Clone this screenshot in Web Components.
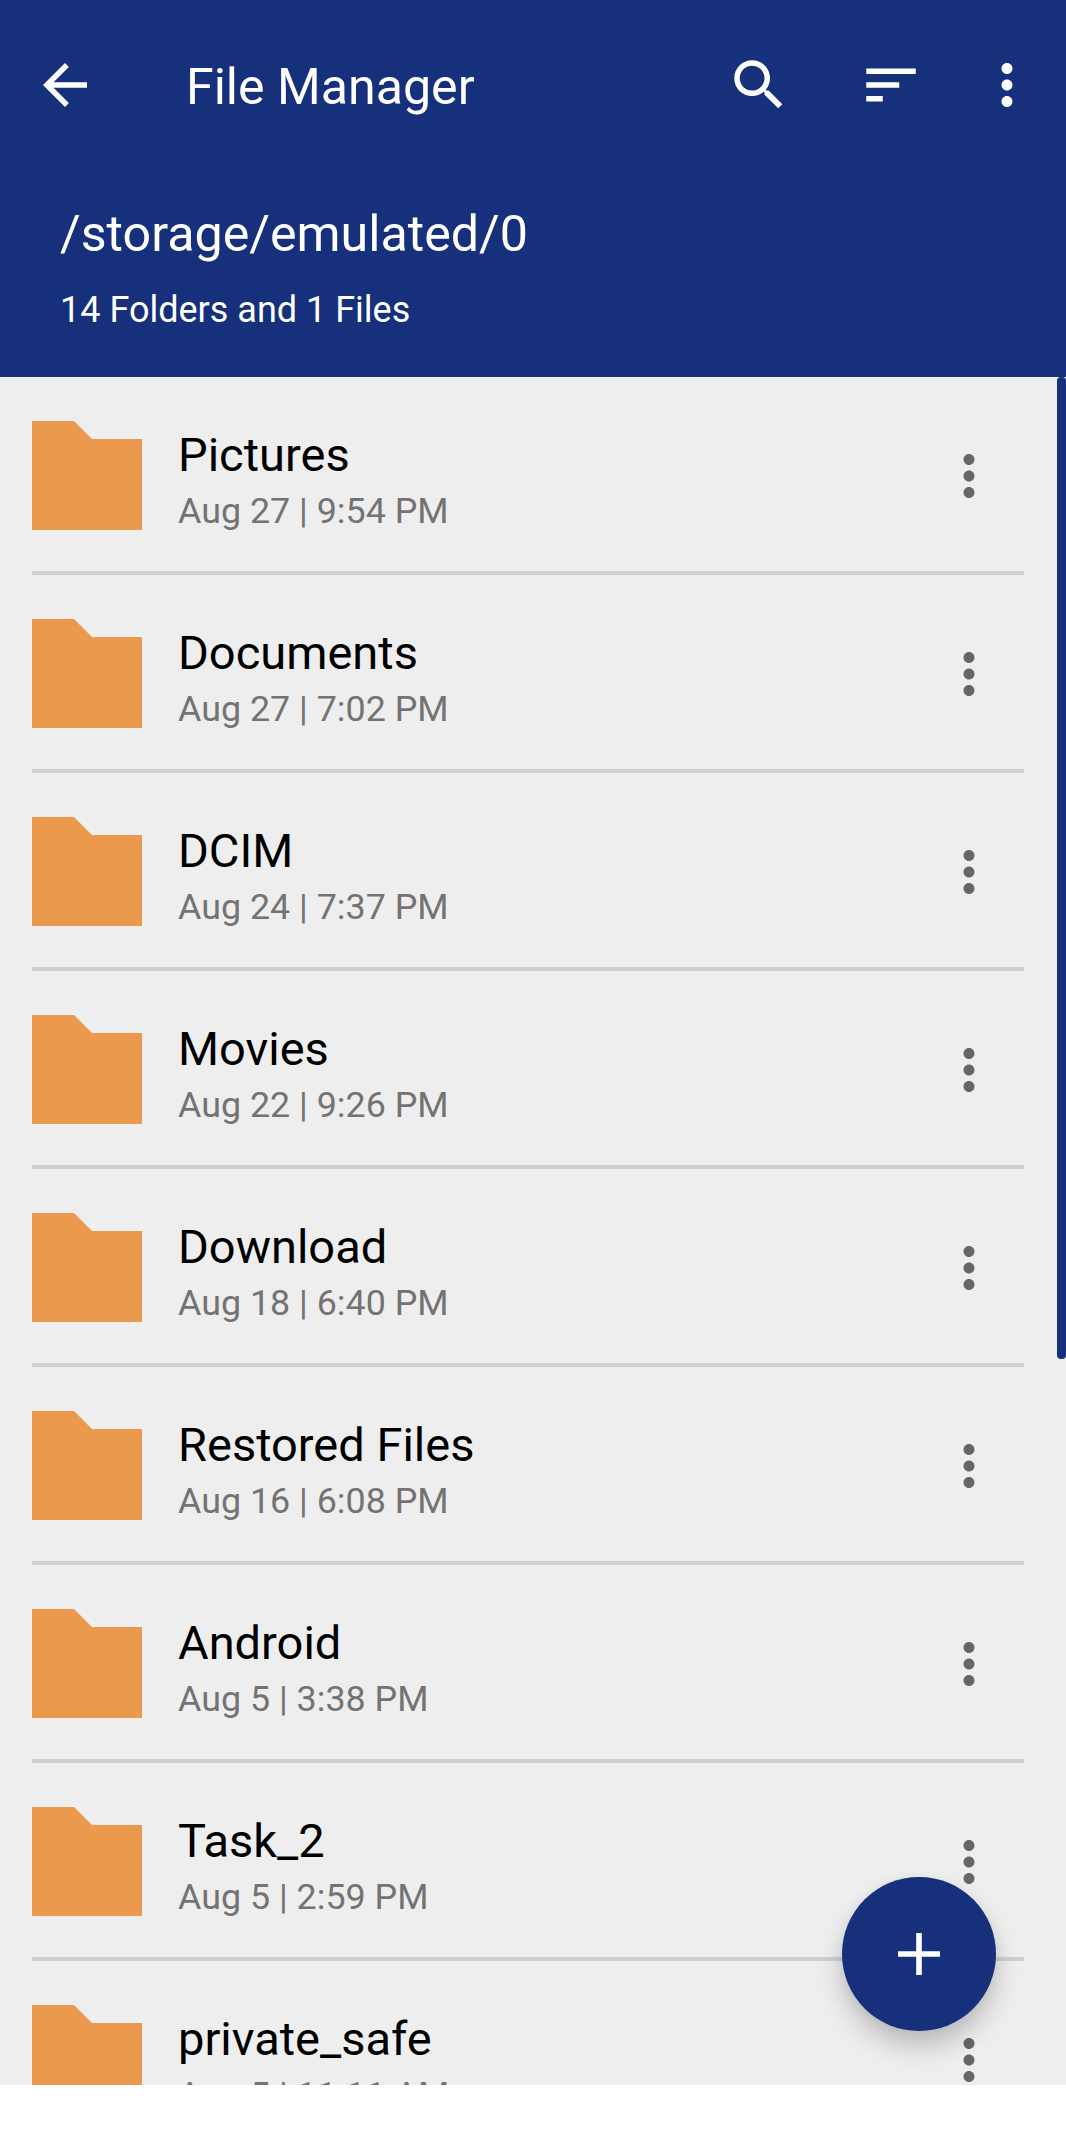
<!DOCTYPE html>
<html lang="en">
<head>
<meta charset="utf-8">
<title>File Manager</title>
<style>
  html, body { margin: 0; height: 100%; background: #fff; overflow: hidden; }
  body { font-family: Roboto, "Noto Sans", sans-serif; }
</style>
</head>
<body>
<file-manager></file-manager>
<script>
const ICONS = {
  back: 'M20 11H7.83l5.59-5.59L12 4l-8 8 8 8 1.41-1.41L7.83 13H20v-2z',
  search: 'M15.5 14h-.79l-.28-.27C15.41 12.59 16 11.11 16 9.5 16 5.91 13.09 3 9.5 3S3 5.91 3 9.5 5.91 16 9.5 16c1.61 0 3.09-.59 4.23-1.57l.27.28v.79l5 4.99L20.49 19l-4.99-5zm-6 0C7.01 14 5 11.99 5 9.5S7.01 5 9.5 5 14 7.01 14 9.5 11.99 14 9.5 14z',
  sort: 'M3 18h6v-2H3v2zM3 6v2h18V6H3zm0 7h12v-2H3v2z',
  more: 'M12 8c1.1 0 2-.9 2-2s-.9-2-2-2-2 .9-2 2 .9 2 2 2zm0 2c-1.1 0-2 .9-2 2s.9 2 2 2 2-.9 2-2-.9-2-2-2zm0 6c-1.1 0-2 .9-2 2s.9 2 2 2 2-.9 2-2-.9-2-2-2z'
};

customElements.define('app-icon', class extends HTMLElement {
  connectedCallback() {
    this.attachShadow({ mode: 'open' }).innerHTML = `
      <style>
        :host { display: block; flex: none; width: 66px; height: 66px; }
        svg { display: block; width: 100%; height: 100%; fill: currentColor; }
      </style>
      <svg viewBox="0 0 24 24"><path d="${ICONS[this.getAttribute('name')]}"/></svg>`;
  }
});

customElements.define('app-header', class extends HTMLElement {
  connectedCallback() {
    this.attachShadow({ mode: 'open' }).innerHTML = `
      <style>
        :host { display: block; flex: none; box-sizing: border-box; height: 377px; background: #17307c; color: #fff; }
        .bar { display: flex; align-items: center; height: 170px; padding: 0 26px 0 32px; }
        .title { flex: 1; margin-left: 88px; padding-top: 4px; font-size: 50.1px; line-height: 60px; white-space: nowrap; }
        .actions { display: flex; align-items: center; }
        .sort { margin: 0 50px 0 66px; }
        .where { display: flex; flex-direction: column; gap: 25px; padding: 34px 60px 0; white-space: nowrap; }
        .path { font-size: 50.2px; line-height: 60px; }
        .count { font-size: 36px; line-height: 42px; }
      </style>
      <div class="bar">
        <app-icon name="back"></app-icon>
        <div class="title"><slot name="title"></slot></div>
        <div class="actions">
          <app-icon name="search"></app-icon>
          <app-icon class="sort" name="sort"></app-icon>
          <app-icon name="more"></app-icon>
        </div>
      </div>
      <div class="where">
        <div class="path"><slot name="path"></slot></div>
        <div class="count"><slot name="count"></slot></div>
      </div>`;
  }
});

customElements.define('folder-row', class extends HTMLElement {
  connectedCallback() {
    this.attachShadow({ mode: 'open' }).innerHTML = `
      <style>
        :host { display: flex; flex: none; box-sizing: border-box; height: 198px; margin: 0 42px 0 32px; border-bottom: 4px solid #d0d0d0; }
        .folder { flex: none; display: block; width: 110px; height: 109px; margin-top: 44px; }
        .text { flex: 1; display: flex; flex-direction: column; gap: 7px; margin: 50px 0 0 36px; white-space: nowrap; }
        .name { font-size: 47px; line-height: 56px; color: #000; }
        .date { font-size: 35.85px; line-height: 42px; color: #737373; }
        app-icon { color: #666; margin: 66px 22px 0 0; }
      </style>
      <svg class="folder" viewBox="0 0 110 109"><path fill="#eb994d" d="M0 0H42L60 18H110V109H0Z"/></svg>
      <div class="text">
        <div class="name"><slot></slot></div>
        <div class="date"><slot name="date"></slot></div>
      </div>
      <app-icon name="more"></app-icon>`;
  }
});

customElements.define('folder-list', class extends HTMLElement {
  connectedCallback() {
    this.attachShadow({ mode: 'open' }).innerHTML = `
      <style>
        :host { display: block; flex: none; position: relative; height: 1708px; overflow: hidden; background: #eee; }
        .rows { display: flex; flex-direction: column; }
        .thumb { position: absolute; top: 0; right: 0; width: 9px; height: 982px; border-radius: 4px; background: #17307c; }
      </style>
      <div class="rows"><slot></slot></div>
      <div class="thumb"></div>
      <slot name="fab"></slot>`;
  }
});

customElements.define('add-button', class extends HTMLElement {
  connectedCallback() {
    this.attachShadow({ mode: 'open' }).innerHTML = `
      <style>
        :host { position: absolute; right: 70px; bottom: 54px; display: flex; align-items: center; justify-content: center;
          width: 154px; height: 154px; border-radius: 50%; background: #17307c; color: #fff;
          box-shadow: 0 16px 26px rgba(0,0,0,.2), 0 2px 12px rgba(0,0,0,.05); }
        svg { display: block; width: 42px; height: 42px; }
      </style>
      <svg viewBox="0 0 42 42"><path d="M21 0V42M0 21H42" stroke="currentColor" stroke-width="5.6"/></svg>`;
  }
});

customElements.define('file-manager', class extends HTMLElement {
  connectedCallback() {
    const folders = [
      ['Pictures', 'Aug 27 | 9:54 PM'],
      ['Documents', 'Aug 27 | 7:02 PM'],
      ['DCIM', 'Aug 24 | 7:37 PM'],
      ['Movies', 'Aug 22 | 9:26 PM'],
      ['Download', 'Aug 18 | 6:40 PM'],
      ['Restored Files', 'Aug 16 | 6:08 PM'],
      ['Android', 'Aug 5 | 3:38 PM'],
      ['Task_2', 'Aug 5 | 2:59 PM'],
      ['private_safe', 'Aug 5 | 11:11 AM']
    ];
    this.attachShadow({ mode: 'open' }).innerHTML = `
      <style>:host { display: flex; flex-direction: column; width: 1066px; height: 2133px; background: #fff; }</style>
      <app-header>
        <span slot="title">File Manager</span>
        <span slot="path">/storage/emulated/0</span>
        <span slot="count">14 Folders and 1 Files</span>
      </app-header>
      <folder-list>
        ${folders.map(([n, d]) => `<folder-row>${n}<span slot="date">${d}</span></folder-row>`).join('')}
        <add-button slot="fab"></add-button>
      </folder-list>`;
  }
});
</script>
</body>
</html>
